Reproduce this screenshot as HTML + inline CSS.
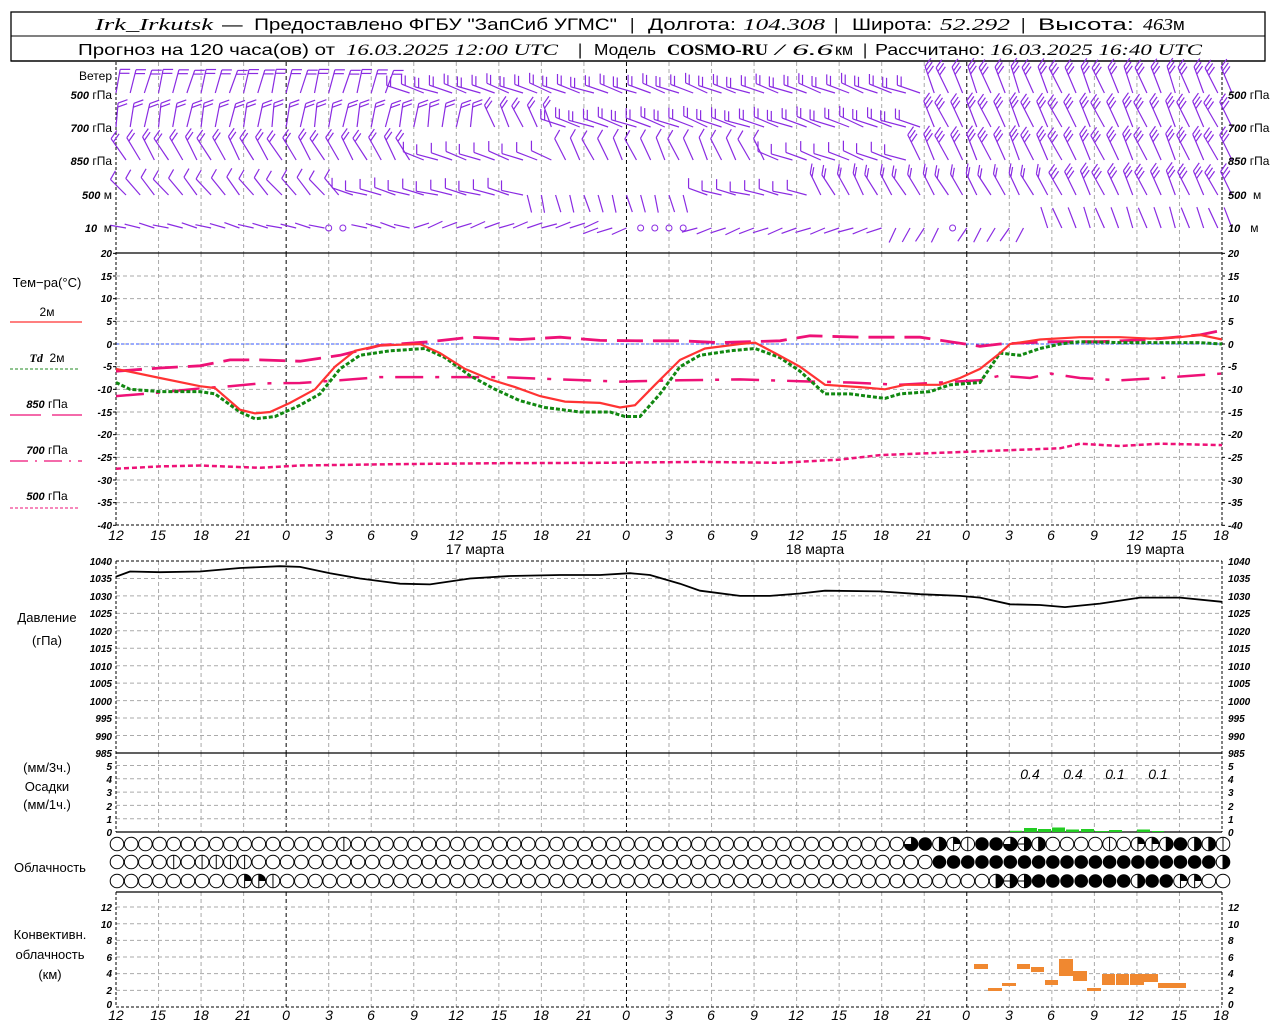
<!DOCTYPE html>
<html><head><meta charset="utf-8">
<style>
html,body{margin:0;padding:0;background:#fff;width:1280px;height:1024px;overflow:hidden}
svg{display:block}
text{font-family:"Liberation Sans","DejaVu Sans",sans-serif;fill:#000}
.h{font-size:17px}
.it{font-family:"Liberation Serif",serif;font-style:italic}
.tk{font-size:10px;font-style:italic;font-weight:bold}
.tl{font-size:14px;font-style:italic}
.lb{font-size:12px}
</style></head><body>
<svg id="s" width="1280" height="1024" xmlns="http://www.w3.org/2000/svg">
<rect x="11" y="12" width="1254" height="49" fill="none" stroke="#000" stroke-width="1.3"/>
<line x1="11" y1="36" x2="1265" y2="36" stroke="#000"/>
<g class="h">
<text x="95" y="30" class="it" textLength="118" lengthAdjust="spacingAndGlyphs">Irk_Irkutsk</text>
<text x="222" y="30" textLength="395" lengthAdjust="spacingAndGlyphs">— &#160;Предоставлено ФГБУ "ЗапСиб УГМС"</text>
<text x="630" y="30">|</text>
<text x="648" y="30" textLength="88" lengthAdjust="spacingAndGlyphs">Долгота:</text>
<text x="743" y="30" class="it" textLength="82" lengthAdjust="spacingAndGlyphs">104.308</text>
<text x="834" y="30">|</text>
<text x="852" y="30" textLength="80" lengthAdjust="spacingAndGlyphs">Широта:</text>
<text x="940" y="30" class="it" textLength="70" lengthAdjust="spacingAndGlyphs">52.292</text>
<text x="1021" y="30">|</text>
<text x="1038" y="30" textLength="96" lengthAdjust="spacingAndGlyphs">Высота:</text>
<text x="1143" y="30" class="it" textLength="30" lengthAdjust="spacingAndGlyphs">463</text><text x="1173" y="30">м</text>
</g>
<g style="font-size:16px">
<text x="78" y="55" textLength="257" lengthAdjust="spacingAndGlyphs">Прогноз на 120 часа(ов) от</text>
<text x="346" y="55" class="it" textLength="212" lengthAdjust="spacingAndGlyphs">16.03.2025 12:00 UTC</text>
<text x="578" y="55">|</text>
<text x="594" y="55" textLength="62" lengthAdjust="spacingAndGlyphs">Модель</text>
<text x="667" y="55" style="font-family:'Liberation Serif',serif;font-weight:bold" textLength="101" lengthAdjust="spacingAndGlyphs">COSMO-RU</text>
<text x="775" y="55" class="it" textLength="58" lengthAdjust="spacingAndGlyphs">/ 6.6</text><text x="835" y="55">км</text>
<text x="863" y="55">|</text>
<text x="875" y="55" textLength="110" lengthAdjust="spacingAndGlyphs">Рассчитано:</text>
<text x="990" y="55" class="it" textLength="212" lengthAdjust="spacingAndGlyphs">16.03.2025 16:40 UTC</text>
</g>
<g id="grid"></g>
<g id="plot"></g>
<!-- wind labels -->
<g class="lb" text-anchor="end">
<text x="112" y="80">Ветер</text>
<text x="112" y="99"><tspan class="tk" style="font-size:11px">500</tspan> гПа</text>
<text x="112" y="132"><tspan class="tk" style="font-size:11px">700</tspan> гПа</text>
<text x="112" y="165"><tspan class="tk" style="font-size:11px">850</tspan> гПа</text>
<text x="112" y="199"><tspan class="tk" style="font-size:11px">500</tspan> м</text>
<text x="112" y="232"><tspan class="tk" style="font-size:11px">10</tspan> &#160;м</text>
</g>
<g class="lb">
<text x="1228" y="99"><tspan class="tk" style="font-size:11px">500</tspan> гПа</text>
<text x="1228" y="132"><tspan class="tk" style="font-size:11px">700</tspan> гПа</text>
<text x="1228" y="165"><tspan class="tk" style="font-size:11px">850</tspan> гПа</text>
<text x="1228" y="199"><tspan class="tk" style="font-size:11px">500</tspan> &#160;м</text>
<text x="1228" y="232"><tspan class="tk" style="font-size:11px">10</tspan> &#160;&#160;м</text>
</g>
<!-- temp legend -->
<g class="lb" text-anchor="middle">
<text x="47" y="287" style="font-size:13px">Тем−ра(°С)</text>
<text x="47" y="316">2м</text>
<text x="47" y="362"><tspan style="font-family:'Liberation Serif',serif;font-style:italic;font-weight:bold">Td</tspan> &#160;2м</text>
<text x="47" y="408"><tspan class="tk" style="font-size:11px">850</tspan> гПа</text>
<text x="47" y="454"><tspan class="tk" style="font-size:11px">700</tspan> гПа</text>
<text x="47" y="500"><tspan class="tk" style="font-size:11px">500</tspan> гПа</text>
<text x="47" y="622" style="font-size:13px">Давление</text>
<text x="47" y="645" style="font-size:13px">(гПа)</text>
<text x="47" y="772" style="font-size:13px">(мм/3ч.)</text>
<text x="47" y="791" style="font-size:13px">Осадки</text>
<text x="47" y="809" style="font-size:13px">(мм/1ч.)</text>
<text x="50" y="872" style="font-size:13px">Облачность</text>
<text x="50" y="939" style="font-size:13px">Конвективн.</text>
<text x="50" y="959" style="font-size:13px">облачность</text>
<text x="50" y="979" style="font-size:13px">(км)</text>
<text x="475" y="554" style="font-size:14px">17 марта</text>
<text x="815" y="554" style="font-size:14px">18 марта</text>
<text x="1155" y="554" style="font-size:14px">19 марта</text>
</g>
<g class="tk" text-anchor="end">
<text x="112" y="257">20</text><text x="112" y="302">10</text><text x="112" y="280">15</text><text x="112" y="325">5</text><text x="112" y="348">0</text><text x="112" y="370">-5</text><text x="112" y="393">-10</text><text x="112" y="416">-15</text><text x="112" y="438">-20</text><text x="112" y="461">-25</text><text x="112" y="484">-30</text><text x="112" y="506">-35</text><text x="112" y="529">-40</text>
<text x="112" y="565">1040</text><text x="112" y="582">1035</text><text x="112" y="600">1030</text><text x="112" y="617">1025</text><text x="112" y="635">1020</text><text x="112" y="652">1015</text><text x="112" y="670">1010</text><text x="112" y="687">1005</text><text x="112" y="705">1000</text><text x="112" y="722">995</text><text x="112" y="740">990</text><text x="112" y="757">985</text>
<text x="112" y="770">5</text><text x="112" y="783">4</text><text x="112" y="796">3</text><text x="112" y="810">2</text><text x="112" y="823">1</text><text x="112" y="836">0</text>
<text x="112" y="911">12</text><text x="112" y="928">10</text><text x="112" y="944">8</text><text x="112" y="961">6</text><text x="112" y="977">4</text><text x="112" y="994">2</text><text x="112" y="1008">0</text>
</g>
<g class="tk">
<text x="1228" y="257">20</text><text x="1228" y="280">15</text><text x="1228" y="302">10</text><text x="1228" y="325">5</text><text x="1228" y="348">0</text><text x="1228" y="370">-5</text><text x="1228" y="393">-10</text><text x="1228" y="416">-15</text><text x="1228" y="438">-20</text><text x="1228" y="461">-25</text><text x="1228" y="484">-30</text><text x="1228" y="506">-35</text><text x="1228" y="529">-40</text>
<text x="1228" y="565">1040</text><text x="1228" y="582">1035</text><text x="1228" y="600">1030</text><text x="1228" y="617">1025</text><text x="1228" y="635">1020</text><text x="1228" y="652">1015</text><text x="1228" y="670">1010</text><text x="1228" y="687">1005</text><text x="1228" y="705">1000</text><text x="1228" y="722">995</text><text x="1228" y="740">990</text><text x="1228" y="757">985</text>
<text x="1228" y="770">5</text><text x="1228" y="783">4</text><text x="1228" y="796">3</text><text x="1228" y="810">2</text><text x="1228" y="823">1</text><text x="1228" y="836">0</text>
<text x="1228" y="911">12</text><text x="1228" y="928">10</text><text x="1228" y="944">8</text><text x="1228" y="961">6</text><text x="1228" y="977">4</text><text x="1228" y="994">2</text><text x="1228" y="1008">0</text>
</g>
<g class="tl" text-anchor="middle">
<text x="116" y="540">12</text><text x="158" y="540">15</text><text x="201" y="540">18</text><text x="243" y="540">21</text><text x="286" y="540">0</text><text x="329" y="540">3</text><text x="371" y="540">6</text><text x="414" y="540">9</text><text x="456" y="540">12</text><text x="499" y="540">15</text><text x="541" y="540">18</text><text x="584" y="540">21</text><text x="626" y="540">0</text><text x="669" y="540">3</text><text x="711" y="540">6</text><text x="754" y="540">9</text><text x="796" y="540">12</text><text x="839" y="540">15</text><text x="881" y="540">18</text><text x="924" y="540">21</text><text x="966" y="540">0</text><text x="1009" y="540">3</text><text x="1051" y="540">6</text><text x="1094" y="540">9</text><text x="1136" y="540">12</text><text x="1179" y="540">15</text><text x="1221" y="540">18</text>
<text x="116" y="1020">12</text><text x="158" y="1020">15</text><text x="201" y="1020">18</text><text x="243" y="1020">21</text><text x="286" y="1020">0</text><text x="329" y="1020">3</text><text x="371" y="1020">6</text><text x="414" y="1020">9</text><text x="456" y="1020">12</text><text x="499" y="1020">15</text><text x="541" y="1020">18</text><text x="584" y="1020">21</text><text x="626" y="1020">0</text><text x="669" y="1020">3</text><text x="711" y="1020">6</text><text x="754" y="1020">9</text><text x="796" y="1020">12</text><text x="839" y="1020">15</text><text x="881" y="1020">18</text><text x="924" y="1020">21</text><text x="966" y="1020">0</text><text x="1009" y="1020">3</text><text x="1051" y="1020">6</text><text x="1094" y="1020">9</text><text x="1136" y="1020">12</text><text x="1179" y="1020">15</text><text x="1221" y="1020">18</text>
<text x="1030" y="779">0.4</text><text x="1073" y="779">0.4</text><text x="1115" y="779">0.1</text><text x="1158" y="779">0.1</text>
</g>
<!-- legend lines -->
<line x1="10" y1="322" x2="82" y2="322" stroke="#ff3333" stroke-width="1.2"/>
<line x1="10" y1="369" x2="78" y2="369" stroke="#228822" stroke-dasharray="3,2"/>
<line x1="10" y1="415" x2="41" y2="415" stroke="#ee1177" stroke-width="1.2"/><line x1="52" y1="415" x2="82" y2="415" stroke="#ee1177" stroke-width="1.2"/>
<line x1="10" y1="461" x2="82" y2="461" stroke="#ee1177" stroke-width="1.2" stroke-dasharray="18,7,2,7"/>
<line x1="10" y1="508" x2="78" y2="508" stroke="#ee1177" stroke-dasharray="3,2"/>
</svg>
<script>
var NS="http://www.w3.org/2000/svg";
var G=document.getElementById('grid'),P=document.getElementById('plot');
function el(p,t,a){var e=document.createElementNS(NS,t);for(var k in a)e.setAttribute(k,a[k]);p.appendChild(e);return e;}
function L(p,x1,y1,x2,y2,c,w,d){var a={x1:x1,y1:y1,x2:x2,y2:y2,stroke:c,'stroke-width':w||1};if(d)a['stroke-dasharray']=d;return el(p,'line',a);}
var X0=116,X1=1222,DX=(X1-X0)/78;
// vertical grid
var panels=[[62,253],[253,525],[561,753],[753,832],[892,1007]];
for(var k=1;k<26;k++){var x=X0+k*3*DX;var day=(k%8==4);
 panels.forEach(function(p){L(G,x,p[0],x,p[1],day?'#000':'#aaa',1,'4,3');});}
// horizontal grid
function hg(y){L(G,X0,y,X1,y,'#aaa',1,'4,3');}
for(var t=15;t>=-35;t-=5){hg(344-4.533*t);}
for(var p=1035;p>985;p-=5){hg(561+(1040-p)*3.49);}
for(var v=1;v<=5;v++)hg(832-13.3*v);
for(var v=2;v<=12;v+=2)hg(1007-8.33*v);
L(G,X0,344,X1,344,'#3355ff',1,'3,2');
// frames
L(G,11,61,1265,61,'#000',1.3);
L(G,X0,253,X1,253,'#000',1.3);
L(G,X0,525,X1,525,'#000',1,'3,2');
L(G,X0,561,X1,561,'#000',1,'3,2');
L(G,X0,753,X1,753,'#000',1.3);
L(G,X0,832,X1,832,'#000',1.3);
L(G,X0,892,X1,892,'#000',1.3);
L(G,X0,1007,X1,1007,'#000',1,'3,2');
[[62,525],[561,832],[892,1007]].forEach(function(p){L(G,X0,p[0],X0,p[1],'#000',1,'3,2');L(G,X1,p[0],X1,p[1],'#000',1,'3,2');});
[[X0,253],[X1,253],[X0,753],[X1,753],[X0,832],[X1,832]].forEach(function(q){});
for(var t=20;t>=-40;t-=5){var y=344-4.533*t;L(G,X0-3,y,X0,y,'#000');L(G,X1,y,X1+3,y,'#000');}
// curves
function curve(pts,f,c,w,d){var s='';pts.forEach(function(q,i){s+=(i?'L':'M')+q[0]+','+f(q[1]).toFixed(1);});var a={d:s,fill:'none',stroke:c,'stroke-width':w};if(d)a['stroke-dasharray']=d;el(P,'path',a);}
var TY=function(t){return 344-4.533*t;};
curve([[116,-27.5],[160,-27],[200,-26.8],[260,-27.3],[300,-26.8],[400,-26.5],[500,-26.3],[600,-26.2],[700,-26],[780,-26.2],[840,-25.5],[880,-24.5],[940,-24],[1000,-23.5],[1060,-23],[1080,-22],[1120,-22.5],[1160,-22],[1222,-22.3]],TY,'#ee1177',2.5,'5,3');
curve([[116,-11.5],[160,-10.7],[200,-9.8],[230,-9.3],[260,-8.7],[300,-8.6],[340,-8],[380,-7.3],[430,-7.3],[500,-7.3],[560,-7.8],[620,-8.3],[680,-8],[740,-7.8],[800,-8.2],[850,-8.5],[900,-9],[940,-8.5],[980,-8],[1000,-7],[1030,-7.5],[1050,-6.5],[1080,-7.5],[1120,-8],[1160,-7.5],[1222,-6.5]],TY,'#ee1177',2.5,'28,12,4,12');
curve([[116,-6],[160,-5.3],[200,-4.8],[230,-3.5],[260,-3.5],[300,-3.8],[340,-2.5],[380,-0.3],[430,0.5],[470,1.5],[520,1.0],[560,1.5],[600,0.8],[640,0.7],[680,0.7],[720,0.3],[780,0.7],[810,1.8],[860,1.5],[920,1.5],[950,0.5],[980,-0.5],[1000,0],[1050,0.5],[1100,0.5],[1150,1],[1200,2],[1222,3]],TY,'#ee1177',2.8,'26,10');
curve([[116,-8.5],[130,-10],[160,-10.5],[200,-10.5],[215,-11],[240,-15],[255,-16.5],[275,-16],[300,-13.5],[320,-11],[340,-5.5],[360,-2.5],[390,-1.5],[425,-1],[445,-3],[470,-7],[495,-10],[520,-12.5],[545,-14],[580,-15],[610,-15],[625,-16],[640,-16],[660,-11],[680,-5],[700,-2.5],[730,-1.5],[755,-1],[780,-3],[800,-6],[825,-11],[850,-11],[885,-12],[900,-11],[930,-10.5],[950,-9],[980,-8.5],[1000,-2],[1020,-2.5],[1040,-1],[1060,0],[1080,0.5],[1120,0.3],[1200,0.3],[1222,0]],TY,'#118811',3,'4,2');
curve([[116,-5.5],[160,-7.5],[200,-9.3],[215,-9.7],[240,-14.5],[255,-15.3],[270,-15],[290,-13],[315,-10],[335,-5],[355,-1.5],[380,-0.3],[420,0],[440,-2],[465,-5.5],[490,-7.8],[515,-9.5],[540,-11.5],[565,-12.7],[600,-13],[620,-14],[635,-13.5],[655,-9],[680,-3.5],[705,-1],[740,0],[755,0.3],[775,-2],[800,-5],[825,-9],[860,-9.5],[885,-10],[905,-9],[940,-9],[960,-7.5],[980,-5.5],[1000,-2],[1010,0],[1040,1],[1080,1.5],[1120,1.5],[1150,1.2],[1180,1.5],[1200,2],[1222,1]],TY,'#ff3333',2.2);
curve([[116,1035.5],[130,1037],[160,1036.8],[200,1037],[240,1038],[280,1038.5],[300,1038.3],[330,1036.5],[360,1035],[400,1033.5],[430,1033.3],[470,1035],[510,1035.7],[560,1036],[600,1036],[630,1036.5],[650,1036],[680,1033.5],[700,1031.5],[740,1030],[770,1030],[800,1030.7],[825,1031.5],[880,1031.3],[920,1030.5],[960,1030],[980,1029.5],[1010,1027.6],[1040,1027.4],[1065,1026.8],[1100,1027.8],[1140,1029.5],[1180,1029.5],[1222,1028.3]],function(p){return 561+(1040-p)*3.49;},'#000',1.8);
// precip
[[1010,1022,1.2],[1024,1037,4],[1038,1051,3],[1052,1065,4.5],[1066,1079,2.5],[1081,1094,3],[1095,1108,1],[1109,1122,2],[1137,1150,2.5],[1152,1164,1]].forEach(function(b){el(P,'rect',{x:b[0],y:832-b[2],width:b[1]-b[0],height:b[2],fill:'#22cc22'});});
// convective
[[974,988,964,969],[988,1002,988,991],[1002,1016,983,986],[1017,1030,964,969],[1031,1044,967,972],[1045,1058,980,985],[1059,1073,959,976],[1073,1087,971,981],[1087,1101,988,991],[1102,1115,974,985],[1116,1129,974,985],[1130,1144,974,985],[1144,1158,974,982],[1158,1186,983,988]].forEach(function(b){el(P,'rect',{x:b[0],y:b[2],width:b[1]-b[0],height:b[3]-b[2],fill:'#f08830'});});
// clouds
var rows=[
'oooooooooooooooovooooooooooooooooooooooooooooooooooooooqfhrvffqehoooovorrhfhhv',
'oooovovvvvoooooooooooooooooooooooooooooooooooooooooooooooooffffffffffffffffffffh',
'ooooooooorrvoooooooooooooooooooooooooooooooooooooooooooooooooheefffffffhffrroo'];
// fix lengths to 79
rows[0]='o'.repeat(16)+'v'+'o'.repeat(37)+'ooqfhrvffqehoooovorrhfhhv';
rows[1]='oooovovvvv'+'o'.repeat(48)+'f'.repeat(20)+'h';
rows[2]='ooooooooorrv'+'o'.repeat(50)+'heefffffffhffrroo';
var ry=[844,862,881],R=6.8;
rows.forEach(function(r,j){for(var i=0;i<79;i++){var c=r[i]||'o';var cx=117+i*DX,cy=ry[j];
 var g=el(P,'g',{});
 if(c=='f'){el(g,'circle',{cx:cx,cy:cy,r:R,fill:'#000'});continue;}
 el(g,'circle',{cx:cx,cy:cy,r:R,fill:'#fff',stroke:'#000','stroke-width':1});
 if(c=='v'||c=='h'||c=='e'){L(g,cx,cy-R,cx,cy+R,'#000',1);}
 if(c=='h'||c=='e'){el(g,'path',{d:'M'+cx+','+(cy-R)+'A'+R+','+R+' 0 0 1 '+cx+','+(cy+R)+'Z',fill:'#000'});}
 if(c=='e'){L(g,cx-R,cy,cx,cy,'#000',1);}
 if(c=='r'){L(g,cx,cy-R,cx,cy+R,'#000',1);el(g,'path',{d:'M'+cx+','+cy+'L'+cx+','+(cy-R)+'A'+R+','+R+' 0 0 1 '+(cx+R)+','+cy+'Z',fill:'#000'});}
 if(c=='q'){el(g,'path',{d:'M'+cx+','+cy+'L'+cx+','+(cy-R)+'A'+R+','+R+' 0 1 1 '+(cx-R)+','+cy+'Z',fill:'#000'});}
}});
// wind barbs
var W='#8a2be2';
function barb(x,y,ang,len,fd,nf){var a=ang*Math.PI/180;var tx=x+len*Math.cos(a),ty=y+len*Math.sin(a);
 L(P,x,y,tx,ty,W,1.2);var f=fd*Math.PI/180;
 for(var n=0;n<nf;n++){var sx=tx-n*4*Math.cos(a),sy=ty-n*4*Math.sin(a);L(P,sx,sy,sx+10*Math.cos(f),sy+10*Math.sin(f),W,1.2);}}
var cfg=[
 [93,[[0,19,-75,24,0,2],[20,56,-160,24,-90,2],[57,78,-112,28,-55,3]]],
 [127,[[0,25,-80,24,-20,2],[26,30,-115,24,-55,2],[31,56,-160,26,-90,2],[57,78,-115,28,-55,3]]],
 [160,[[0,20,-120,26,-55,2],[21,30,-160,22,-90,1],[31,45,-115,24,-60,1],[46,55,-160,22,-90,1],[56,78,-115,28,-55,3]]],
 [195,[[0,15,-130,22,-60,1],[16,28,-165,22,-90,1],[29,40,75,18,-90,0],[41,48,-165,20,-90,1],[49,65,-120,24,-80,2],[66,78,-115,26,-55,3]]],
 [228,[[0,20,-165,16,-90,0],[21,33,-20,16,0,0],[34,54,160,16,0,0],[55,64,120,16,0,0],[65,78,-110,22,0,0]]]];
cfg.forEach(function(row){var yb=row[0];row[1].forEach(function(s){for(var i=s[0];i<=s[1];i++){
 var jit=((i*37)%11-5);
 if(yb==228&&[15,16,37,38,39,40,59].indexOf(i)>=0){el(P,'circle',{cx:X0+i*DX,cy:yb,r:3,fill:'none',stroke:W});continue;}
 var bx=X0+i*DX+(s[2]<-100?10:0);
 barb(bx,yb,s[2]+jit,s[3],s[4],s[5]);}});});
</script>
</body></html>
